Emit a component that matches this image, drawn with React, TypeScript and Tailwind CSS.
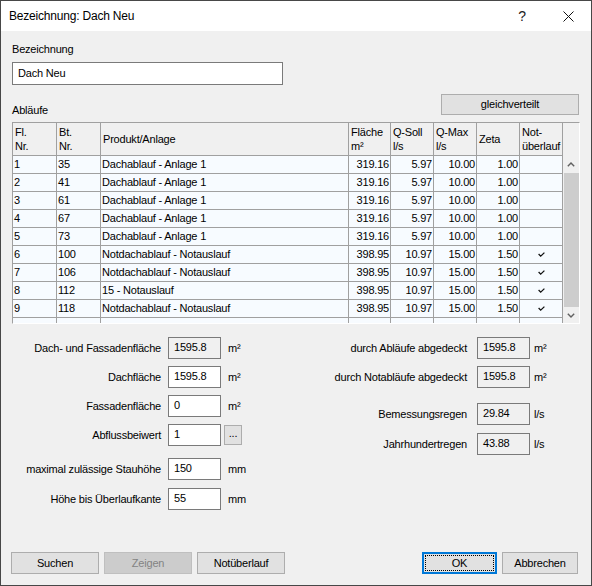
import React from "react";

type Col = { w: string; head: string[]; align: "left" | "right" | "center" };

const cols: Col[] = [
  { w: "w-[44px]", head: ["Fl.", "Nr."], align: "left" },
  { w: "w-[44px]", head: ["Bt.", "Nr."], align: "left" },
  { w: "w-[248px]", head: ["Produkt/Anlage"], align: "left" },
  { w: "w-[42px]", head: ["Fläche", "m²"], align: "right" },
  { w: "w-[43px]", head: ["Q-Soll", "l/s"], align: "right" },
  { w: "w-[43px]", head: ["Q-Max", "l/s"], align: "right" },
  { w: "w-[43px]", head: ["Zeta"], align: "right" },
  { w: "w-[43px]", head: ["Not-", "überlauf"], align: "center" },
];

type Row = [string, string, string, string, string, string, string, boolean];

const rows: Row[] = [
  ["1", "35", "Dachablauf - Anlage 1", "319.16", "5.97", "10.00", "1.00", false],
  ["2", "41", "Dachablauf - Anlage 1", "319.16", "5.97", "10.00", "1.00", false],
  ["3", "61", "Dachablauf - Anlage 1", "319.16", "5.97", "10.00", "1.00", false],
  ["4", "67", "Dachablauf - Anlage 1", "319.16", "5.97", "10.00", "1.00", false],
  ["5", "73", "Dachablauf - Anlage 1", "319.16", "5.97", "10.00", "1.00", false],
  ["6", "100", "Notdachablauf - Notauslauf", "398.95", "10.97", "15.00", "1.50", true],
  ["7", "106", "Notdachablauf - Notauslauf", "398.95", "10.97", "15.00", "1.50", true],
  ["8", "112", "15 - Notauslauf", "398.95", "10.97", "15.00", "1.50", true],
  ["9", "118", "Notdachablauf - Notauslauf", "398.95", "10.97", "15.00", "1.50", true],
];

const alignCls = (a: Col["align"]) =>
  a === "right" ? "justify-end pr-[1px]" : a === "center" ? "justify-center" : "justify-start pl-[1px]";

function Check() {
  return (
    <svg width="7" height="5" viewBox="0 0 7 5" className="block">
      <path d="M0.6 2 L2.7 4.1 L6.4 0.6" fill="none" stroke="#111" strokeWidth="1.3" />
    </svg>
  );
}

function Chevron({ down }: { down?: boolean }) {
  return (
    <svg width="8" height="5" viewBox="0 0 8 5" className="block">
      <path
        d={down ? "M0.8 0.8 L4 4 L7.2 0.8" : "M0.8 4.2 L4 1 L7.2 4.2"}
        fill="none"
        stroke="#606060"
        strokeWidth="1.4"
      />
    </svg>
  );
}

function Field({ value, readOnly, wide }: { value: string; readOnly?: boolean; wide?: boolean }) {
  return (
    <div
      className={`h-[22px] ${wide ? "w-[271px]" : "w-[53px]"} border border-[#7a7a7a] ${
        readOnly ? "bg-[#f0f0f0]" : "bg-white"
      } flex items-center pl-[5px] pb-[1px] shrink-0`}
    >
      {value}
    </div>
  );
}

function Btn({ label, w, disabled }: { label: string; w: string; disabled?: boolean }) {
  return (
    <div
      className={`${w} h-[22px] border flex items-center justify-center shrink-0 ${
        disabled ? "bg-[#cccccc] border-[#bfbfbf] text-[#838383]" : "bg-[#e1e1e1] border-[#adadad]"
      }`}
    >
      {label}
    </div>
  );
}

function LeftRow({
  label,
  value,
  unit,
  readOnly,
  more,
  mt,
}: {
  label: string;
  value: string;
  unit?: string;
  readOnly?: boolean;
  more?: boolean;
  mt: string;
}) {
  return (
    <div className={`flex items-center h-[22px] ${mt}`}>
      <span className="w-[150px] text-right pr-[1px] shrink-0">{label}</span>
      <div className="ml-[6px]">
        <Field value={value} readOnly={readOnly} />
      </div>
      {more && (
        <div className="ml-[3px] w-[18px] h-[20px] border border-[#adadad] bg-[#e1e1e1] flex items-center justify-center text-[11px] leading-none pb-[3px]">
          ...
        </div>
      )}
      {unit && <span className="ml-[7px]">{unit}</span>}
    </div>
  );
}

function RightRow({ label, value, unit, mt }: { label: string; value: string; unit: string; mt: string }) {
  return (
    <div className={`flex items-center h-[22px] ${mt}`}>
      <span className="w-[155px] text-right shrink-0">{label}</span>
      <div className="ml-[10px]">
        <Field value={value} readOnly />
      </div>
      <span className="ml-[4px]">{unit}</span>
    </div>
  );
}

export default function App() {
  return (
    <div className="w-[592px] h-[586px] border border-[#474747] flex flex-col bg-[#f0f0f0] text-black font-['Liberation_Sans',Arial,sans-serif] text-[11px] leading-[13px] tracking-[-0.2px] overflow-hidden">
      {/* title bar */}
      <div className="h-[30px] bg-white flex items-center shrink-0">
        <span className="pl-[8px] text-[12px] flex-1">Bezeichnung: Dach Neu</span>
        <div className="w-[46px] h-full flex items-center justify-center text-[14px] text-[#222]">?</div>
        <div className="w-[46px] h-full flex items-center justify-center">
          <svg width="11" height="11" viewBox="0 0 11 11" className="block">
            <path d="M0.5 0.5 L10.5 10.5 M10.5 0.5 L0.5 10.5" stroke="#111" strokeWidth="1" fill="none" />
          </svg>
        </div>
      </div>

      {/* dialog body */}
      <div className="flex-1 flex flex-col pl-[11px] pr-[11px] pb-[11px]">
        <div className="mt-[12px] h-[13px]">Bezeichnung</div>
        <div className="mt-[6px] h-[23px] w-[271px] border border-[#7a7a7a] bg-white flex items-center pl-[5px]">
          Dach Neu
        </div>

        <div className="mt-[9px] flex items-start justify-between">
          <span className="mt-[10px] h-[13px]">Abläufe</span>
          <div className="mr-[1px]">
            <div className="w-[138px] h-[21px] border border-[#adadad] bg-[#e1e1e1] flex items-center justify-center">
              gleichverteilt
            </div>
          </div>
        </div>

        {/* grid */}
        <div className="mt-[5px] h-[202px] border-t border-l border-[#a0a0a0] border-r border-r-white border-b border-b-white flex flex-col bg-[#f0f0f0]">
          <div className="flex h-[33px] shrink-0">
            {cols.map((c, i) => (
              <div
                key={i}
                className={`${c.w} shrink-0 border-r border-b border-[#a0a0a0] flex flex-col justify-center pl-[2px] leading-[14px]`}
              >
                {c.head.map((h, j) => (
                  <span key={j}>{h}</span>
                ))}
              </div>
            ))}
            <div className="flex-1" />
          </div>
          <div className="flex flex-1 min-h-0">
            <div className="w-[550px] shrink-0 flex flex-col bg-[#f7fbff]">
              {rows.map((r, ri) => (
                <div key={ri} className="flex h-[18px] shrink-0">
                  {cols.map((c, ci) => (
                    <div
                      key={ci}
                      className={`${c.w} shrink-0 border-r border-b border-[#a0a0a0] flex items-center ${alignCls(c.align)}`}
                    >
                      {ci === 7 ? r[7] ? <Check /> : null : (r[ci] as string)}
                    </div>
                  ))}
                </div>
              ))}
              <div className="flex flex-1">
                {cols.map((c, ci) => (
                  <div key={ci} className={`${c.w} shrink-0 border-r border-[#a0a0a0]`} />
                ))}
              </div>
            </div>
            {/* vertical scroll bar */}
            <div className="w-[16px] shrink-0 flex flex-col bg-[#f0f0f0]">
              <div className="h-[17px] flex items-center justify-center shrink-0">
                <Chevron />
              </div>
              <div className="flex-1 ml-[1px] bg-[#cdcdcd]" />
              <div className="h-[16px] flex items-center justify-center shrink-0">
                <Chevron down />
              </div>
            </div>
          </div>
        </div>

        {/* area and rain figures */}
        <div className="mt-[13px] flex">
          <div className="w-[300px] shrink-0 flex flex-col">
            <LeftRow label="Dach- und Fassadenfläche" value="1595.8" unit="m²" readOnly mt="mt-0" />
            <LeftRow label="Dachfläche" value="1595.8" unit="m²" mt="mt-[7px]" />
            <LeftRow label="Fassadenfläche" value="0" unit="m²" mt="mt-[7px]" />
            <LeftRow label="Abflussbeiwert" value="1" more mt="mt-[7px]" />
            <LeftRow label="maximal zulässige Stauhöhe" value="150" unit="mm" mt="mt-[12px]" />
            <LeftRow label="Höhe bis Überlaufkante" value="55" unit="mm" mt="mt-[8px]" />
          </div>
          <div className="flex flex-col">
            <RightRow label="durch Abläufe abgedeckt" value="1595.8" unit="m²" mt="mt-0" />
            <RightRow label="durch Notabläufe abgedeckt" value="1595.8" unit="m²" mt="mt-[7px]" />
            <RightRow label="Bemessungsregen" value="29.84" unit="l/s" mt="mt-[15px]" />
            <RightRow label="Jahrhundertregen" value="43.88" unit="l/s" mt="mt-[8px]" />
          </div>
        </div>

        <div className="flex-1" />

        {/* dialog buttons */}
        <div className="flex items-center -ml-[1px] mr-[2px]">
          <Btn label="Suchen" w="w-[88px]" />
          <div className="ml-[5px]">
            <Btn label="Zeigen" w="w-[88px]" disabled />
          </div>
          <div className="ml-[5px]">
            <Btn label="Notüberlauf" w="w-[88px]" />
          </div>
          <div className="flex-1" />
          <div className="relative w-[75px] h-[22px] border-2 border-[#0078d7] bg-[#e1e1e1] flex items-center justify-center">
            <div className="absolute inset-[1px] border border-dotted border-black" />
            OK
          </div>
          <div className="ml-[5px]">
            <Btn label="Abbrechen" w="w-[76px]" />
          </div>
        </div>
      </div>
    </div>
  );
}
